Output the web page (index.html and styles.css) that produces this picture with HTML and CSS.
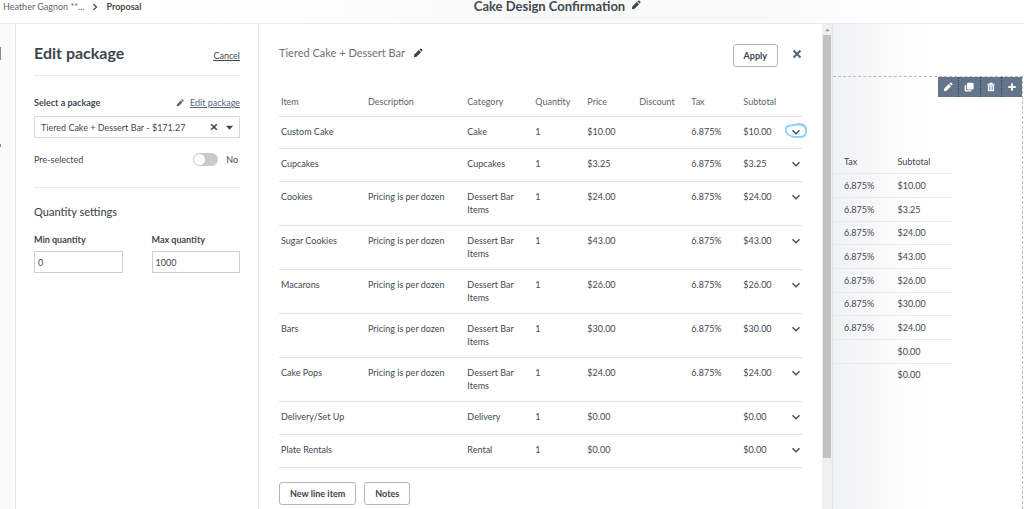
FILE: index.html
```html
<!DOCTYPE html>
<html lang="en">
<head>
<meta charset="utf-8">
<meta name="viewport" content="width=device-width, initial-scale=1">
<title>Cake Design Confirmation</title>
<link rel="stylesheet" href="styles.css">
</head>
<body>
<svg class="defs" aria-hidden="true">
  <symbol id="pencil" viewBox="0 0 12 12"><path d="M1 11l.6-3.2L7 2.400 9.600 5 4.200 10.400zM7.700 1.700l.9-.9a1 1 0 0 1 1.400 0l1.200 1.200a1 1 0 0 1 0 1.400l-.9.9z"/></symbol>
  <symbol id="cross" viewBox="0 0 10 10"><path d="M1.500 1.500l7 7M8.500 1.500l-7 7" fill="none" stroke="currentColor" stroke-width="2"/></symbol>
  <symbol id="chevron" viewBox="0 0 10 10"><path d="M1.500 3.200L5 6.800l3.500-3.600" fill="none" stroke="currentColor" stroke-width="1.300"/></symbol>
  <symbol id="copy" viewBox="0 0 12 12"><rect x="3.500" y="1" width="8" height="8" rx="1.500"/><path d="M2.500 3.500v5a1.500 1.500 0 0 0 1.500 1.500h5v.3a1 1 0 0 1-1 1H2a1.200 1.200 0 0 1-1.200-1.200V4.700a1.200 1.200 0 0 1 1.200-1.200z"/></symbol>
  <symbol id="trash" viewBox="0 0 12 12"><path d="M4.500 1h3l.5 1h2.500v1.300h-9V2H4zM2.200 4h7.600v6a1.200 1.200 0 0 1-1.200 1.200H3.400A1.200 1.200 0 0 1 2.200 10z"/><path d="M4.200 5v5M6 5v5M7.800 5v5" stroke="#64748a" stroke-width=".7"/></symbol>
  <symbol id="plus" viewBox="0 0 12 12"><path d="M6 1.500v9M1.500 6h9" fill="none" stroke="currentColor" stroke-width="2.200"/></symbol>
</svg>
<header class="topbar">
  <nav class="crumbs" aria-label="Breadcrumb">
    <a class="crumb" href="#">Heather Gagnon **...</a>
    <svg class="crumb-arrow" viewBox="0 0 6 8"><path d="M1.500 1l3 3-3 3" fill="none" stroke="currentColor" stroke-width="1.200"/></svg>
    <b>Proposal</b>
  </nav>
  <h1 class="title">Cake Design Confirmation</h1>
  <button class="icon-btn" aria-label="Rename"><svg class="icon"><use href="#pencil"/></svg></button>
</header>
<div class="workspace">
  <div class="rail"><i class="rail-mark tall"></i><i class="rail-mark"></i></div>
  <aside class="sidebar">
    <div class="side-head"><h2>Edit package</h2><a href="#">Cancel</a></div>
    <div class="field-head">
      <b id="package-label">Select a package</b>
      <span class="edit-link"><svg class="icon small"><use href="#pencil"/></svg><a href="#">Edit package</a></span>
    </div>
    <button class="combo" aria-labelledby="package-label package-value">
      <span class="combo-value" id="package-value">Tiered Cake + Dessert Bar - $171.27</span>
      <svg class="icon small"><use href="#cross"/></svg>
      <svg class="caret" viewBox="0 0 8 5"><path d="M0 .5h8L4 5z"/></svg>
    </button>
    <div class="switch-row">
      <label for="pre">Pre-selected</label>
      <input class="switch" type="checkbox" id="pre">
      <span>No</span>
    </div>
    <h3>Quantity settings</h3>
    <div class="quantities">
      <div class="quantity"><label for="min">Min quantity</label><input id="min" type="text" value="0"></div>
      <div class="quantity"><label for="max">Max quantity</label><input id="max" type="text" value="1000"></div>
    </div>
  </aside>
  <main class="panel">
    <div class="panel-head">
      <h2>Tiered Cake + Dessert Bar</h2>
      <button class="icon-btn" aria-label="Edit name"><svg class="icon"><use href="#pencil"/></svg></button>
      <button class="btn apply">Apply</button>
      <button class="icon-btn close" aria-label="Close"><svg class="icon"><use href="#cross"/></svg></button>
    </div>
    <table class="items">
      <colgroup><col class="c-item"><col class="c-desc"><col class="c-cat"><col class="c-num"><col class="c-num"><col class="c-num"><col class="c-num"><col class="c-sub"><col></colgroup>
      <thead><tr><th>Item</th><th>Description</th><th>Category</th><th>Quantity</th><th>Price</th><th>Discount</th><th>Tax</th><th>Subtotal</th><th></th></tr></thead>
      <tbody>
        <tr><td>Custom Cake</td><td></td><td>Cake</td><td>1</td><td>$10.00</td><td></td><td>6.875%</td><td>$10.00</td><td><button class="expand" aria-label="Expand"><svg class="icon"><use href="#chevron"/></svg><svg class="ring" viewBox="0 0 24 18"><path d="M8 3.500C4 3.200 1.500 5 1.700 8c.3 4 4.500 6.500 9 6.900 4 .3 8 .4 10-1.500 1.700-2 1.700-6 .3-8C19 2.500 15 2 9 3M13 2.200c4-.5 8 0 8.500 4" fill="none" stroke="#8fd3f2" stroke-width="2" stroke-linecap="round"/></svg></button></td></tr>
        <tr><td>Cupcakes</td><td></td><td>Cupcakes</td><td>1</td><td>$3.25</td><td></td><td>6.875%</td><td>$3.25</td><td><button class="expand" aria-label="Expand"><svg class="icon"><use href="#chevron"/></svg></button></td></tr>
        <tr><td>Cookies</td><td>Pricing is per dozen</td><td>Dessert Bar<br>Items</td><td>1</td><td>$24.00</td><td></td><td>6.875%</td><td>$24.00</td><td><button class="expand" aria-label="Expand"><svg class="icon"><use href="#chevron"/></svg></button></td></tr>
        <tr><td>Sugar Cookies</td><td>Pricing is per dozen</td><td>Dessert Bar<br>Items</td><td>1</td><td>$43.00</td><td></td><td>6.875%</td><td>$43.00</td><td><button class="expand" aria-label="Expand"><svg class="icon"><use href="#chevron"/></svg></button></td></tr>
        <tr><td>Macarons</td><td>Pricing is per dozen</td><td>Dessert Bar<br>Items</td><td>1</td><td>$26.00</td><td></td><td>6.875%</td><td>$26.00</td><td><button class="expand" aria-label="Expand"><svg class="icon"><use href="#chevron"/></svg></button></td></tr>
        <tr><td>Bars</td><td>Pricing is per dozen</td><td>Dessert Bar<br>Items</td><td>1</td><td>$30.00</td><td></td><td>6.875%</td><td>$30.00</td><td><button class="expand" aria-label="Expand"><svg class="icon"><use href="#chevron"/></svg></button></td></tr>
        <tr><td>Cake Pops</td><td>Pricing is per dozen</td><td>Dessert Bar<br>Items</td><td>1</td><td>$24.00</td><td></td><td>6.875%</td><td>$24.00</td><td><button class="expand" aria-label="Expand"><svg class="icon"><use href="#chevron"/></svg></button></td></tr>
        <tr><td>Delivery/Set Up</td><td></td><td>Delivery</td><td>1</td><td>$0.00</td><td></td><td></td><td>$0.00</td><td><button class="expand" aria-label="Expand"><svg class="icon"><use href="#chevron"/></svg></button></td></tr>
        <tr><td>Plate Rentals</td><td></td><td>Rental</td><td>1</td><td>$0.00</td><td></td><td></td><td>$0.00</td><td><button class="expand" aria-label="Expand"><svg class="icon"><use href="#chevron"/></svg></button></td></tr>
      </tbody>
    </table>
    <div class="actions"><button class="btn">New line item</button><button class="btn">Notes</button></div>
  </main>
  <div class="scrollbar" aria-hidden="true">
    <svg class="scroll-arrow" viewBox="0 0 6 4"><path d="M0 3.500L3 .5l3 3z"/></svg>
    <div class="thumb"></div>
  </div>
  <section class="preview" aria-label="Proposal preview">
    <div class="block">
      <div class="tools">
        <button aria-label="Edit"><svg class="icon"><use href="#pencil"/></svg></button>
        <button aria-label="Duplicate"><svg class="icon"><use href="#copy"/></svg></button>
        <button aria-label="Delete"><svg class="icon"><use href="#trash"/></svg></button>
        <button aria-label="Add"><svg class="icon"><use href="#plus"/></svg></button>
      </div>
      <table class="totals">
        <thead><tr><th>Tax</th><th>Subtotal</th></tr></thead>
        <tbody>
          <tr><td>6.875%</td><td>$10.00</td></tr>
          <tr><td>6.875%</td><td>$3.25</td></tr>
          <tr><td>6.875%</td><td>$24.00</td></tr>
          <tr><td>6.875%</td><td>$43.00</td></tr>
          <tr><td>6.875%</td><td>$26.00</td></tr>
          <tr><td>6.875%</td><td>$30.00</td></tr>
          <tr><td>6.875%</td><td>$24.00</td></tr>
          <tr><td></td><td>$0.00</td></tr>
          <tr><td></td><td>$0.00</td></tr>
        </tbody>
      </table>
    </div>
  </section>
</div>
</body>
</html>
```
FILE: styles.css
```css
* { box-sizing: border-box; }
body {
  margin: 0;
  height: 100vh;
  overflow: hidden;
  display: flex;
  flex-direction: column;
  font: 9px/13px Lato, "Liberation Sans", sans-serif;
  color: #43484f;
  background: #fff;
}
h1, h2, h3 { margin: 0; font-weight: 500; }
a { color: inherit; }
button, input { font: inherit; color: inherit; margin: 0; }
button { cursor: pointer; }
table { border-collapse: collapse; table-layout: fixed; }
th { font-weight: 400; text-align: left; }
.defs { position: absolute; width: 0; height: 0; }
.icon { width: 10px; height: 10px; fill: currentColor; display: block; flex: none; }
.icon.small { width: 8px; height: 8px; }
.icon-btn { border: 0; background: none; padding: 0; color: #3c424b; }

.topbar {
  flex: none;
  display: grid;
  grid-template-columns: 1fr auto 1fr;
  column-gap: 6px;
  height: 24px;
  padding: 0 0 10px 3px;
  border-bottom: 1px solid #ebebeb;
  background: linear-gradient(90deg, #fff 15%, #f9f9f9 50%, #f9f9f9 75%, #fff 90%);
  align-items: start;
}
.crumbs { display: flex; align-items: center; gap: 8px; white-space: nowrap; }
.crumb { color: #5f646b; text-decoration: none; }
.crumb-arrow { width: 6px; height: 8px; }
.title { margin-left: 72px; font-size: 13px; line-height: 13px; font-weight: 700; white-space: nowrap; color: #434850; }

.workspace { flex: 1; min-height: 0; display: flex; }
.rail {
  flex: 0 0 16px;
  padding-top: 23px;
  display: flex;
  flex-direction: column;
  gap: 84px;
  background: #fafafa;
  border-right: 1px solid #e6e6e6;
}
.rail-mark { width: 1px; height: 3px; background: #8c8c8c; }
.rail-mark.tall { height: 13px; }

.sidebar { flex: 0 0 243px; padding: 0 18px; border-right: 1px solid #e6e6e6; background: #fff; }
.side-head {
  display: flex;
  justify-content: space-between;
  align-items: baseline;
  padding: 19px 0 13px;
  border-bottom: 1px solid #ebebeb;
}
.side-head h2 { font-size: 16px; line-height: 19px; font-weight: 500; color: #3e444d; -webkit-text-stroke: 0; font-weight: 700; }
.field-head { display: flex; justify-content: space-between; margin-top: 20px; }
.edit-link { display: flex; align-items: center; gap: 6px; color: #56647a; }
.combo {
  width: 100%;
  height: 22px;
  margin-top: 7px;
  padding: 0 6px;
  display: flex;
  align-items: center;
  gap: 8px;
  border: 1px solid #d9d9d9;
  background: #fff;
  text-align: left;
}
.combo-value { flex: 1; white-space: nowrap; }
.caret { width: 7px; height: 5px; fill: #3e444d; }
.switch-row { display: flex; align-items: center; gap: 8px; padding: 15px 2px 21px 0; border-bottom: 1px solid #ebebeb; }
.switch-row label { flex: 1; }
.switch {
  appearance: none;
  display: flex;
  width: 25px;
  height: 13px;
  padding: 1px;
  border-radius: 7px;
  background: #c9cacc;
}
.switch::before { content: ""; width: 11px; height: 11px; border-radius: 50%; background: #fff; }
.switch:checked { justify-content: flex-end; }
.sidebar h3 { margin: 16px 0 13px; font-size: 11px; line-height: 16px; color: #434850; }
.quantities { display: grid; grid-template-columns: 1fr 1fr; column-gap: 29px; }
.quantity { display: flex; flex-direction: column; gap: 5px; font-weight: 700; }
.quantity input { width: 100%; height: 22px; padding: 0 3px; border: 1px solid #cfcfcf; border-radius: 0; font-weight: 400; }

.panel { flex: 0 1 563px; padding: 19px 20px 0; background: #fff; }
.panel-head { display: flex; align-items: center; height: 24px; gap: 8px; }
.panel-head h2 { font-size: 11px; line-height: 16px; font-weight: 400; color: #6c7077; padding-bottom: 4px; }
.panel-head h2 + .icon-btn { padding-bottom: 4px; }
.btn {
  height: 23px;
  padding: 0 10px;
  border: 1px solid #b5b5b5;
  border-radius: 3px;
  background: #fff;
  font-weight: 700;
  color: #3c424b;
}
.apply { margin-left: auto; }
.close { margin: 0 0 3px 6px; color: #56647a; }
.items { width: 100%; margin-top: 22px; }
.c-item { width: 87px; }
.c-desc { width: 19%; }
.c-cat { width: 68px; }
.c-num { width: 52px; }
.c-sub { width: 48px; }
.items th { height: 27px; padding: 6px 0 8px 2px; color: #5f646b; }
.items td { height: 33px; padding: 8px 0 9px 2px; vertical-align: top; }
.items tbody tr:first-child td { height: 32px; }
.items tr { border-bottom: 1px solid #e3e3e3; }
.expand { position: relative; display: block; padding: 2px 0 0; border: 0; background: none; }
.ring { position: absolute; left: -7px; top: -3px; width: 24px; height: 18px; }
.actions { display: flex; gap: 8px; margin-top: 14px; }

.scrollbar { flex: 0 0 11px; padding: 4px 1px 0; background: #f0f0f0; border-right: 1px solid #e3e3e3; }
.scroll-arrow { display: block; width: 5px; height: 4px; margin: 0 auto 3px; fill: #999; }
.thumb { height: 88%; background: #c1c2c1; }

.preview {
  flex: 1;
  display: flex;
  padding: 52px 1px 0 0;
  background: linear-gradient(90deg, #f1f2f4, #f9f9fa 25%, #fff 50%);
}
.block { flex: 1; border-top: 1px dashed #b9bcb9; border-right: 1px dashed #b9bcb9; }
.tools { display: flex; width: 84px; margin-left: auto; background: #64748a; }
.tools button { flex: 1; display: flex; justify-content: center; padding: 5px 0; border: 0; background: none; color: #fff; }
.tools button + button { border-left: 1px dotted #39414e; }
.totals { width: 63%; margin-top: 54px; }
.totals th { height: 22px; padding: 4px 0 5px 11px; }
.totals td { height: 24px; padding: 4px 0 5px 11px; }
.totals tr:nth-child(3n) td { height: 23px; }
.totals th + th, .totals td + td { padding-left: 5px; }
.totals tr { border-bottom: 1px solid #e9eaeb; }
.totals tbody tr:last-child { border-bottom: 0; }
```
